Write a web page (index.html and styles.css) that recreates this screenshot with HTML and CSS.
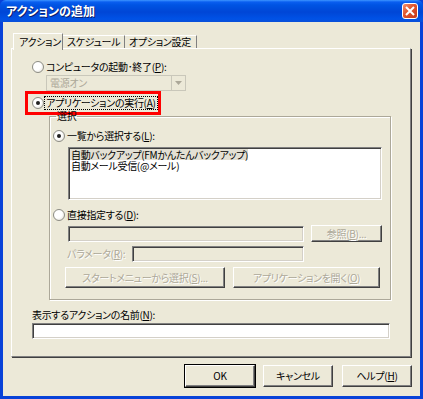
FILE: index.html
```html
<!DOCTYPE html>
<html lang="ja">
<head>
    <meta charset="UTF-8">
    <title>アクションの追加</title>
    <link rel="stylesheet" href="styles.css">
</head>
<body>

<div class="window">
    <!-- Title bar -->
    <div class="titlebar">
        <span class="title">アクションの追加</span>
        <span class="close">
            <svg width="10" height="10" viewBox="0 0 10 10">
                <path d="M1 1 L9 9 M9 1 L1 9" stroke="#fff" stroke-width="2" fill="none"/>
            </svg>
        </span>
    </div>

    <div class="client">
        <!-- Tabs -->
        <div class="tabs">
            <div class="tab active">アクション</div>
            <div class="tab">スケジュール</div>
            <div class="tab">オプション設定</div>
        </div>

        <div class="panel">
            <div class="opt opt-power">
                <span class="radio"></span>
                <span>コンピュータの起動･終了(<u>P</u>):</span>
            </div>

            <div class="combo">
                <span class="combo-text">電源オン</span>
                <span class="combo-btn">
                    <svg width="7" height="4" viewBox="0 0 7 4"><path d="M0 0 H7 L3.5 4 Z" fill="#aca899"/></svg>
                </span>
            </div>

            <!-- marked option -->
            <div class="highlight">
                <span class="radio checked"></span>
                <span class="focus">アプリケーションの実行(<u>A</u>)</span>
            </div>

            <fieldset class="group">
                <legend>選択</legend>

                <div class="opt opt-list">
                    <span class="radio checked"></span>
                    <span>一覧から選択する(<u>L</u>):</span>
                </div>
                <div class="listbox">
                    <div class="item selected">自動バックアップ(FMかんたんバックアップ)</div>
                    <div class="item">自動メール受信(@メール)</div>
                </div>

                <div class="opt opt-direct">
                    <span class="radio"></span>
                    <span>直接指定する(<u>D</u>):</span>
                </div>
                <div class="row row-path">
                    <div class="edit edit-path"></div>
                    <button class="btn btn-disabled btn-browse">参照(<u>B</u>)...</button>
                </div>
                <div class="row row-param">
                    <span class="disabled-label">パラメータ(<u>R</u>):</span>
                    <div class="edit edit-param"></div>
                </div>
                <div class="row row-buttons">
                    <button class="btn btn-disabled btn-start">スタートメニューから選択(<u>S</u>)...</button>
                    <button class="btn btn-disabled btn-open">アプリケーションを開く(<u>O</u>)</button>
                </div>
            </fieldset>

            <div class="name-label">表示するアクションの名前(<u>N</u>):</div>
            <div class="edit name-edit"></div>
        </div>

        <!-- Dialog buttons -->
        <div class="actions">
            <button class="btn btn-default">OK</button>
            <button class="btn">キャンセル</button>
            <button class="btn">ヘルプ(<u>H</u>)</button>
        </div>
    </div>
</div>

</body>
</html>
```

FILE: styles.css
```css
/* General */
* {
    box-sizing: border-box;
    margin: 0;
    padding: 0;
}

body {
    font-family: "Noto Sans CJK JP", "Noto Sans", sans-serif;
    font-size: 10px;
    font-feature-settings: "palt";
    letter-spacing: -0.3px;
    line-height: 12px;
    color: #000;
    background: #fff;
    white-space: nowrap;
}

u {
    text-decoration: underline;
    text-underline-offset: 1px;
}

/* Window frame */
.window {
    width: 423px;
    height: 399px;
    display: flex;
    flex-direction: column;
    background: #0842d8;
}

.titlebar {
    height: 22px;
    display: flex;
    align-items: center;
    justify-content: space-between;
    padding: 0 5px 0 6px;
    background: linear-gradient(to bottom, #3d95ff 0, #0a5ef0 2px, #0054e3 5px, #0046d6 12px, #0052e6 19px, #0a4fd8 22px);
    border-radius: 6px 6px 0 0;
}

.title {
    color: #fff;
    font-weight: bold;
    font-size: 12px;
    letter-spacing: 0;
    text-shadow: 1px 1px 0 #0a1f6e;
}

.close {
    width: 16px;
    height: 16px;
    display: flex;
    align-items: center;
    justify-content: center;
    border: 1px solid #fff;
    border-radius: 3px;
    background: linear-gradient(135deg, #f0906e 0, #e0542c 45%, #c6381a 100%);
}

.client {
    flex: 1;
    margin: 0 3px 3px;
    background: #ece9d8;
    display: flex;
    flex-direction: column;
}

/* Tabs */
.tabs {
    display: flex;
    align-items: flex-end;
    height: 15px;
    margin-top: 11px;
    padding-left: 10px;
}

.tab {
    height: 13px;
    padding: 0 4px;
    line-height: 12px;
    border-top: 1px solid #fff;
    border-left: 1px solid #fff;
    border-right: 1px solid #808080;
    background: #ece9d8;
}

.tab.active {
    height: 17px;
    margin-bottom: -2px;
    padding: 2px 5px 0;
    position: relative;
    z-index: 1;
}

.tab + .tab {
    border-left: none;
}

.tab:nth-child(1) { width: 50px; }
.tab:nth-child(2) { width: 62px; }
.tab:nth-child(3) { width: 72px; }

.panel {
    width: 400px;
    height: 309px;
    margin-left: 8px;
    border-top: 1px solid #fff;
    border-left: 1px solid #fff;
    border-right: 1px solid #808080;
    border-bottom: 1px solid #808080;
    box-shadow: 1px 1px 0 #404040;
    display: flex;
    flex-direction: column;
    align-items: flex-start;
}

/* Radio options */
.opt {
    display: flex;
    align-items: center;
    height: 14px;
    gap: 2px;
}

.radio {
    width: 12px;
    height: 12px;
    border-radius: 50%;
    border: 1px solid #8c8c84;
    background: radial-gradient(circle at 40% 40%, #fff 0, #fff 45%, #dcd9cc 100%);
    display: flex;
    align-items: center;
    justify-content: center;
    flex: none;
}

.radio.checked::after {
    content: "";
    width: 4px;
    height: 4px;
    border-radius: 50%;
    background: #222;
}

.opt-power {
    margin-top: 11px;
    margin-left: 20px;
}

/* Disabled combo */
.combo {
    width: 140px;
    height: 16px;
    margin-top: 1px;
    margin-left: 34px;
    display: flex;
    border: 1px solid #c9c7ba;
    background: #ece9d8;
}

.combo-text {
    flex: 1;
    padding-left: 3px;
    line-height: 14px;
    color: #aca899;
}

.combo-btn {
    width: 14px;
    display: flex;
    align-items: center;
    justify-content: center;
    border-left: 1px solid #c9c7ba;
}

/* Red marker */
.highlight {
    width: 136px;
    height: 24px;
    margin-left: 13px;
    border: 3px solid #f00;
    display: flex;
    align-items: center;
    gap: 1px;
    padding-left: 4px;
}

.focus {
    outline: 1px dotted #000;
    outline-offset: 0;
    padding: 0 1px;
}

/* Group box */
.group {
    width: 342px;
    height: 190px;
    margin-top: -5px;
    margin-left: 37px;
    border: 1px solid #aca899;
    box-shadow: 1px 1px 0 #fff, inset 1px 1px 0 #fff;
    padding: 0 0 0 3px;
}

.group legend {
    margin-left: 3px;
    padding: 0 1px;
    line-height: 12px;
}

.opt-list {
    margin-top: 7px;
}

.listbox {
    width: 314px;
    height: 53px;
    margin-top: 4px;
    margin-left: 15px;
    padding: 1px;
    background: #fff;
    border-top: 1px solid #808080;
    border-left: 1px solid #808080;
    border-right: 1px solid #fff;
    border-bottom: 1px solid #fff;
    box-shadow: inset 1px 1px 0 #404040, inset -1px -1px 0 #d4d0c8;
}

.item {
    padding-left: 1px;
    height: 11px;
    line-height: 11px;
    width: max-content;
}

.item.selected {
    background: #e3e0d4;
}

.opt-direct {
    margin-top: 8px;
}

/* Edit boxes */
.edit {
    height: 16px;
    background: #ece9d8;
    border-top: 1px solid #808080;
    border-left: 1px solid #808080;
    border-right: 1px solid #fff;
    border-bottom: 1px solid #fff;
    box-shadow: inset 1px 1px 0 #404040, inset -1px -1px 0 #d4d0c8;
}

.row {
    display: flex;
    align-items: center;
    margin-left: 15px;
}

.row-path {
    margin-top: 3px;
    gap: 7px;
}

.edit-path { width: 236px; }
.btn-browse { width: 71px; height: 17px; }

.row-param {
    margin-top: 4px;
    margin-left: 14px;
}

.disabled-label {
    width: 65px;
    color: #aca899;
    text-shadow: 1px 1px 0 #fff;
}

.edit-param { width: 172px; }

.row-buttons {
    margin-top: 5px;
    margin-left: 12px;
    gap: 8px;
}

.btn-start { width: 160px; height: 21px; }
.btn-open { width: 147px; height: 21px; }

/* Name field */
.name-label {
    margin-top: 9px;
    margin-left: 20px;
}

.name-edit {
    width: 358px;
    margin-top: 2px;
    margin-left: 20px;
    background: #fff;
}

/* Buttons */
.btn {
    font-family: inherit;
    font-size: 10px;
    font-feature-settings: "palt";
    letter-spacing: -0.3px;
    line-height: 12px;
    color: #000;
    background: #ece9d8;
    border-top: 1px solid #fff;
    border-left: 1px solid #fff;
    border-right: 1px solid #404040;
    border-bottom: 1px solid #404040;
    box-shadow: inset -1px -1px 0 #808080;
    display: flex;
    align-items: center;
    justify-content: center;
}

.btn-disabled {
    color: #aca899;
    text-shadow: 1px 1px 0 #fff;
}

.actions {
    display: flex;
    gap: 8px;
    margin-top: 8px;
    margin-left: 182px;
}

.actions .btn {
    width: 70px;
    height: 22px;
}

.actions .btn + .btn + .btn {
    margin-left: 1px;
}

.btn-default {
    outline: 1px solid #000;
}
```
